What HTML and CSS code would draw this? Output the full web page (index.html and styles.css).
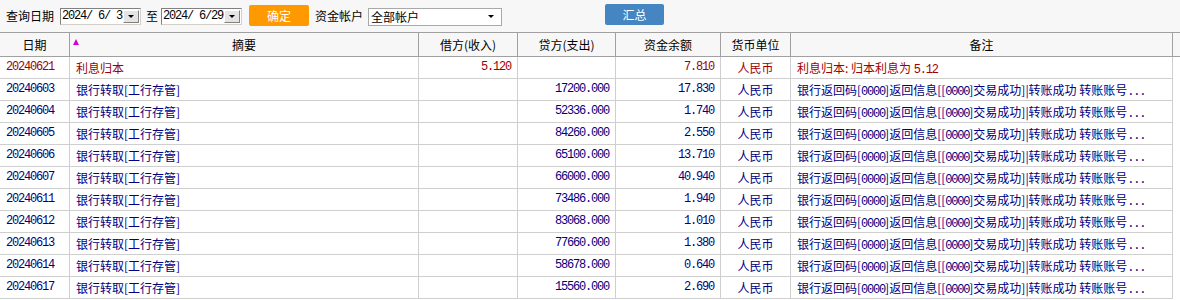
FILE: index.html
```html
<!DOCTYPE html>
<html lang="zh-CN">
<head>
<meta charset="utf-8">
<link rel="stylesheet" href="styles.css">
</head>
<body>
<div class="toolbar">
  <span class="lbl lbl-date">查询日期</span>
  <div class="datebox d1"><span class="dval">2024/ 6/ 3</span><span class="ddbtn"><i class="tri"></i></span></div>
  <span class="lbl lbl-to">至</span>
  <div class="datebox d2"><span class="dval">2024/ 6/29</span><span class="ddbtn"><i class="tri"></i></span></div>
  <button class="btn-ok">确定</button>
  <span class="lbl lbl-acct">资金帐户</span>
  <div class="acctbox"><span class="aval">全部帐户</span><i class="tri"></i></div>
  <button class="btn-sum">汇总</button>
</div>
<div class="thead">
  <div class="row hrow">
    <div class="c">日期</div>
    <div class="c sortcell"><span class="sort"></span>摘要</div>
    <div class="c">借方(收入)</div>
    <div class="c">贷方(支出)</div>
    <div class="c">资金余额</div>
    <div class="c">货币单位</div>
    <div class="c">备注</div>
  </div>
</div>
<div class="tbody">
  <div class="row drow red">
    <div class="c num date">20240621</div>
    <div class="c txt">利息归本</div>
    <div class="c num r">5.120</div>
    <div class="c num r"></div>
    <div class="c num r">7.810</div>
    <div class="c mid">人民币</div>
    <div class="c txt note">利息归本: 归本利息为 <span class="m">5.12</span></div>
  </div>
  <div class="row drow">
    <div class="c num date">20240603</div>
    <div class="c txt">银行转取[工行存管]</div>
    <div class="c num r"></div>
    <div class="c num r">17200.000</div>
    <div class="c num r">17.830</div>
    <div class="c mid">人民币</div>
    <div class="c txt note">银行返回码[<span class="m">0000</span>]返回信息[[<span class="m">0000</span>]交易成功]|转账成功 转账账号<span class="m">...</span></div>
  </div>
  <div class="row drow">
    <div class="c num date">20240604</div>
    <div class="c txt">银行转取[工行存管]</div>
    <div class="c num r"></div>
    <div class="c num r">52336.000</div>
    <div class="c num r">1.740</div>
    <div class="c mid">人民币</div>
    <div class="c txt note">银行返回码[<span class="m">0000</span>]返回信息[[<span class="m">0000</span>]交易成功]|转账成功 转账账号<span class="m">...</span></div>
  </div>
  <div class="row drow">
    <div class="c num date">20240605</div>
    <div class="c txt">银行转取[工行存管]</div>
    <div class="c num r"></div>
    <div class="c num r">84260.000</div>
    <div class="c num r">2.550</div>
    <div class="c mid">人民币</div>
    <div class="c txt note">银行返回码[<span class="m">0000</span>]返回信息[[<span class="m">0000</span>]交易成功]|转账成功 转账账号<span class="m">...</span></div>
  </div>
  <div class="row drow">
    <div class="c num date">20240606</div>
    <div class="c txt">银行转取[工行存管]</div>
    <div class="c num r"></div>
    <div class="c num r">65100.000</div>
    <div class="c num r">13.710</div>
    <div class="c mid">人民币</div>
    <div class="c txt note">银行返回码[<span class="m">0000</span>]返回信息[[<span class="m">0000</span>]交易成功]|转账成功 转账账号<span class="m">...</span></div>
  </div>
  <div class="row drow">
    <div class="c num date">20240607</div>
    <div class="c txt">银行转取[工行存管]</div>
    <div class="c num r"></div>
    <div class="c num r">66000.000</div>
    <div class="c num r">40.940</div>
    <div class="c mid">人民币</div>
    <div class="c txt note">银行返回码[<span class="m">0000</span>]返回信息[[<span class="m">0000</span>]交易成功]|转账成功 转账账号<span class="m">...</span></div>
  </div>
  <div class="row drow">
    <div class="c num date">20240611</div>
    <div class="c txt">银行转取[工行存管]</div>
    <div class="c num r"></div>
    <div class="c num r">73486.000</div>
    <div class="c num r">1.940</div>
    <div class="c mid">人民币</div>
    <div class="c txt note">银行返回码[<span class="m">0000</span>]返回信息[[<span class="m">0000</span>]交易成功]|转账成功 转账账号<span class="m">...</span></div>
  </div>
  <div class="row drow">
    <div class="c num date">20240612</div>
    <div class="c txt">银行转取[工行存管]</div>
    <div class="c num r"></div>
    <div class="c num r">83068.000</div>
    <div class="c num r">1.010</div>
    <div class="c mid">人民币</div>
    <div class="c txt note">银行返回码[<span class="m">0000</span>]返回信息[[<span class="m">0000</span>]交易成功]|转账成功 转账账号<span class="m">...</span></div>
  </div>
  <div class="row drow">
    <div class="c num date">20240613</div>
    <div class="c txt">银行转取[工行存管]</div>
    <div class="c num r"></div>
    <div class="c num r">77660.000</div>
    <div class="c num r">1.380</div>
    <div class="c mid">人民币</div>
    <div class="c txt note">银行返回码[<span class="m">0000</span>]返回信息[[<span class="m">0000</span>]交易成功]|转账成功 转账账号<span class="m">...</span></div>
  </div>
  <div class="row drow">
    <div class="c num date">20240614</div>
    <div class="c txt">银行转取[工行存管]</div>
    <div class="c num r"></div>
    <div class="c num r">58678.000</div>
    <div class="c num r">0.640</div>
    <div class="c mid">人民币</div>
    <div class="c txt note">银行返回码[<span class="m">0000</span>]返回信息[[<span class="m">0000</span>]交易成功]|转账成功 转账账号<span class="m">...</span></div>
  </div>
  <div class="row drow">
    <div class="c num date">20240617</div>
    <div class="c txt">银行转取[工行存管]</div>
    <div class="c num r"></div>
    <div class="c num r">15560.000</div>
    <div class="c num r">2.690</div>
    <div class="c mid">人民币</div>
    <div class="c txt note">银行返回码[<span class="m">0000</span>]返回信息[[<span class="m">0000</span>]交易成功]|转账成功 转账账号<span class="m">...</span></div>
  </div>
</div>
</body>
</html>
```
FILE: styles.css
```css
* { box-sizing: border-box; }
html, body { margin: 0; padding: 0; }
body {
  width: 1180px;
  height: 300px;
  overflow: hidden;
  background: #ffffff;
  font-family: "Noto Sans CJK SC", "Liberation Sans", sans-serif;
  font-size: 12px;
  color: #000;
}
.toolbar {
  height: 32px;
  background: #f7f7f7;
  display: flex;
  align-items: center;
  padding-left: 6px;
}
.lbl { line-height: 16px; white-space: nowrap; }
.lbl-date { margin-right: 6px; }
.lbl-to { margin: 0 3px 0 5px; }
.lbl-acct { margin: 0 5px 0 6px; }
.datebox {
  width: 81px;
  height: 17px;
  background: #fff;
  border: 1px solid #808080;
  border-right-color: #d4d0c8;
  border-bottom-color: #d4d0c8;
  display: flex;
  align-items: center;
  justify-content: space-between;
  margin-top: 1px;
}
.dval {
  font-family: "Liberation Mono", monospace;
  font-size: 12px;
  letter-spacing: -1.2px;
  padding-left: 1px;
  line-height: 15px;
  white-space: pre;
}
.ddbtn {
  width: 16px;
  height: 13px;
  margin-right: 1px;
  background: #e4e4e4;
  border: 1px solid #fff;
  border-right-color: #808080;
  border-bottom-color: #808080;
  display: flex;
  align-items: center;
  justify-content: center;
}
.tri {
  display: block;
  width: 0;
  height: 0;
  border-left: 3px solid transparent;
  border-right: 3px solid transparent;
  border-top: 3px solid #000;
}
.btn-ok {
  margin-left: 7px;
  width: 60px;
  height: 21px;
  border: none;
  border-radius: 2px;
  background: #ff9900;
  color: #fff;
  font-family: "Noto Sans CJK SC", sans-serif;
  font-size: 12px;
  padding: 0;
  margin-top: -1px;
}
.acctbox {
  width: 134px;
  height: 18px;
  background: #fff;
  border: 1px solid #a9a9a9;
  display: flex;
  align-items: center;
  justify-content: space-between;
  padding: 0 7px 0 2px;
  margin-top: 1px;
}
.aval { line-height: 16px; }
.btn-sum {
  margin-left: 103px;
  width: 59px;
  height: 21px;
  border: none;
  border-radius: 2px;
  background: #4485c2;
  color: #fff;
  font-family: "Noto Sans CJK SC", sans-serif;
  font-size: 12px;
  padding: 0;
  margin-top: -3px;
}
.thead {
  background: #f7f7f7;
  border-top: 1px solid #a0a0a0;
  border-bottom: 1px solid #a0a0a0;
}
.row {
  display: grid;
  grid-template-columns: 70px 349px 99px 98px 105px 70px 382px;
  width: 1173px;
}
.hrow { height: 23px; }
.hrow .c {
  border-right: 1px solid #a0a0a0;
  text-align: center;
  line-height: 23px;
}
.hrow .c:first-child { border-right-color: #a0a0a0; }
.sortcell { position: relative; }
.sort {
  position: absolute;
  left: 3px;
  top: 6px;
  width: 0;
  height: 0;
  border-left: 3.5px solid transparent;
  border-right: 3.5px solid transparent;
  border-bottom: 6px solid #d400d4;
}
.drow {
  height: 22px;
  color: #000080;
}
.drow.red { color: #a00000; }
.drow .c {
  border-right: 1px solid #cfcfcf;
  border-bottom: 1px solid #cfcfcf;
  line-height: 21px;
  white-space: nowrap;
  overflow: hidden;
}
.num {
  font-family: "Liberation Mono", monospace;
  letter-spacing: -1.2px;
}
.m {
  font-family: "Liberation Mono", monospace;
  letter-spacing: -1.2px;
}
.date { padding-left: 6px; }
.txt { padding-left: 6px; }
.r { text-align: right; padding-right: 6px; }
.mid { text-align: center; }
.note { padding-left: 6px; }
```
